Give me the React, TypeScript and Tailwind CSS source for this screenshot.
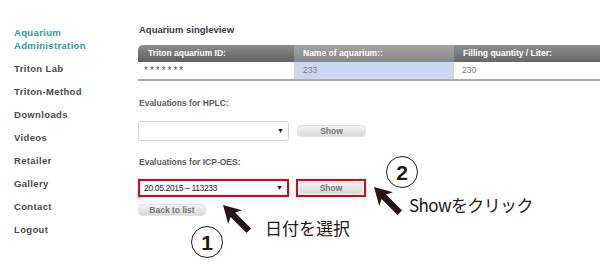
import React from "react";

const nav = ["Triton Lab", "Triton-Method", "Downloads", "Videos", "Retailer", "Gallery", "Contact", "Logout"];

function Cursor({ className }: { className: string }) {
  return (
    <svg className={className} width="30" height="30" viewBox="0 0 28 28">
      <polygon
        points="0,0 17.7,4.9 11.3,7.1 26.2,21.9 21.9,26.2 7.1,11.3 4.9,17.7"
        fill="#231815"
      />
    </svg>
  );
}

function Circle({ n, className }: { n: string; className: string }) {
  return (
    <div
      className={`absolute w-[32px] h-[32px] rounded-full border-[1.5px] border-[#231815] flex items-center justify-center text-[21px] font-bold text-[#231815] leading-none ${className}`}
      style={{ fontFamily: "'Liberation Sans', Arial, sans-serif" }}
    >
      {n}
    </div>
  );
}

function Select({ text, red }: { text?: string; red?: boolean }) {
  return (
    <div
      className={`w-[151px] flex items-center justify-between bg-white ${
        red ? "h-[18px] border-2 border-[#e3000f]" : "h-[20px] border border-[#d6d6d6] rounded-[3px]"
      }`}
    >
      <span className="pl-[4px] text-[8.5px] text-[#222] tracking-[-0.35px]">{text ?? ""}</span>
      <span className="pr-[4px] text-[7px] text-[#111]">▼</span>
    </div>
  );
}

function Btn({ label, w }: { label: string; w: string }) {
  return (
    <div
      className={`${w} h-[12px] rounded-[4px] bg-linear-to-b from-[#f3f3f3] to-[#d9d9d9] border border-[#e4e4e4] flex items-center justify-center text-[8.5px] font-bold text-[#777]`}
    >
      {label}
    </div>
  );
}

export default function App() {
  return (
    <div
      className="relative w-[600px] h-[270px] overflow-hidden bg-white flex"
      style={{ fontFamily: "'Liberation Sans', Arial, sans-serif" }}
    >
      <div className="w-[138px] shrink-0 pl-[14px] pt-[26px] flex flex-col gap-[10px] text-[9.5px] font-bold leading-[13px] tracking-[0.35px] text-[#4a4a4a]">
        <div className="text-[#1f9aa2]">
          Aquarium
          <br />
          Administration
        </div>
        {nav.map((n) => (
          <div key={n}>{n}</div>
        ))}
      </div>

      <div className="flex-1 flex flex-col pt-[24px]">
        <div className="pl-[1px] h-[12px] leading-[12px] text-[9.5px] font-bold text-[#3a3a3a]">
          Aquarium singleview
        </div>

        <div className="mt-[9px] flex flex-col text-[8.5px]">
          <div className="flex h-[17px] text-white font-bold items-center">
            <div className="w-[156px] h-full rounded-tl-[5px] bg-linear-to-b from-[#8e8e8e] to-[#5f5f5f] pl-[10px] flex items-center">
              Triton aquarium ID:
            </div>
            <div className="w-[160px] h-full bg-linear-to-b from-[#a4a4a4] to-[#878787] pl-[9px] flex items-center">
              Name of aquarium::
            </div>
            <div className="flex-1 h-full bg-linear-to-b from-[#8e8e8e] to-[#686868] pl-[9px] flex items-center">
              Filling quantity / Liter:
            </div>
          </div>
          <div className="flex h-[17px] items-center border-b-2 border-[#acacac] box-content">
            <div className="w-[156px] h-full pl-[6px] flex items-center text-[10px] text-[#555] tracking-[2px]">*******</div>
            <div className="w-[160px] h-full bg-[#c9d8ee] pl-[9px] flex items-center text-[#7a7a7a]">233</div>
            <div className="flex-1 h-full pl-[8px] flex items-center text-[#777]">230</div>
          </div>
        </div>

        <div className="mt-[16px] h-[12px] leading-[12px] pl-[1px] text-[8.5px] font-bold text-[#5a5a5a]">
          Evaluations for HPLC:
        </div>
        <div className="mt-[12px] flex items-center gap-[8px]">
          <Select />
          <Btn label="Show" w="w-[69px]" />
        </div>

        <div className="mt-[15px] h-[12px] leading-[12px] pl-[1px] text-[8.5px] font-bold text-[#5a5a5a]">
          Evaluations for ICP-OES:
        </div>
        <div className="mt-[11px] flex items-center gap-[7px]">
          <Select text="20.05.2015 – 113233" red />
          <div className="w-[70px] h-[18px] border-2 border-[#e3000f] flex items-center justify-center bg-white">
            <Btn label="Show" w="w-[64px]" />
          </div>
        </div>
        <div className="mt-[7px]">
          <Btn label="Back to list" w="w-[68px]" />
        </div>
      </div>

      {/* annotations */}
      <Circle n="2" className="left-[386px] top-[156px]" />
      <Cursor className="absolute left-[374px] top-[187px]" />
      <div
        className="absolute left-[409px] top-[194px] text-[17px] leading-[22px] tracking-[-0.6px] text-[#231815] whitespace-nowrap"
        style={{ fontFamily: "'Noto Sans CJK JP', 'Noto Sans', sans-serif" }}
      >
        Showをクリック
      </div>

      <Circle n="1" className="left-[191px] top-[226px]" />
      <Cursor className="absolute left-[223px] top-[205px]" />
      <div
        className="absolute left-[265px] top-[217px] text-[17px] leading-[22px] text-[#231815] whitespace-nowrap"
        style={{ fontFamily: "'Noto Sans CJK JP', 'Noto Sans', sans-serif" }}
      >
        日付を選択
      </div>
    </div>
  );
}
